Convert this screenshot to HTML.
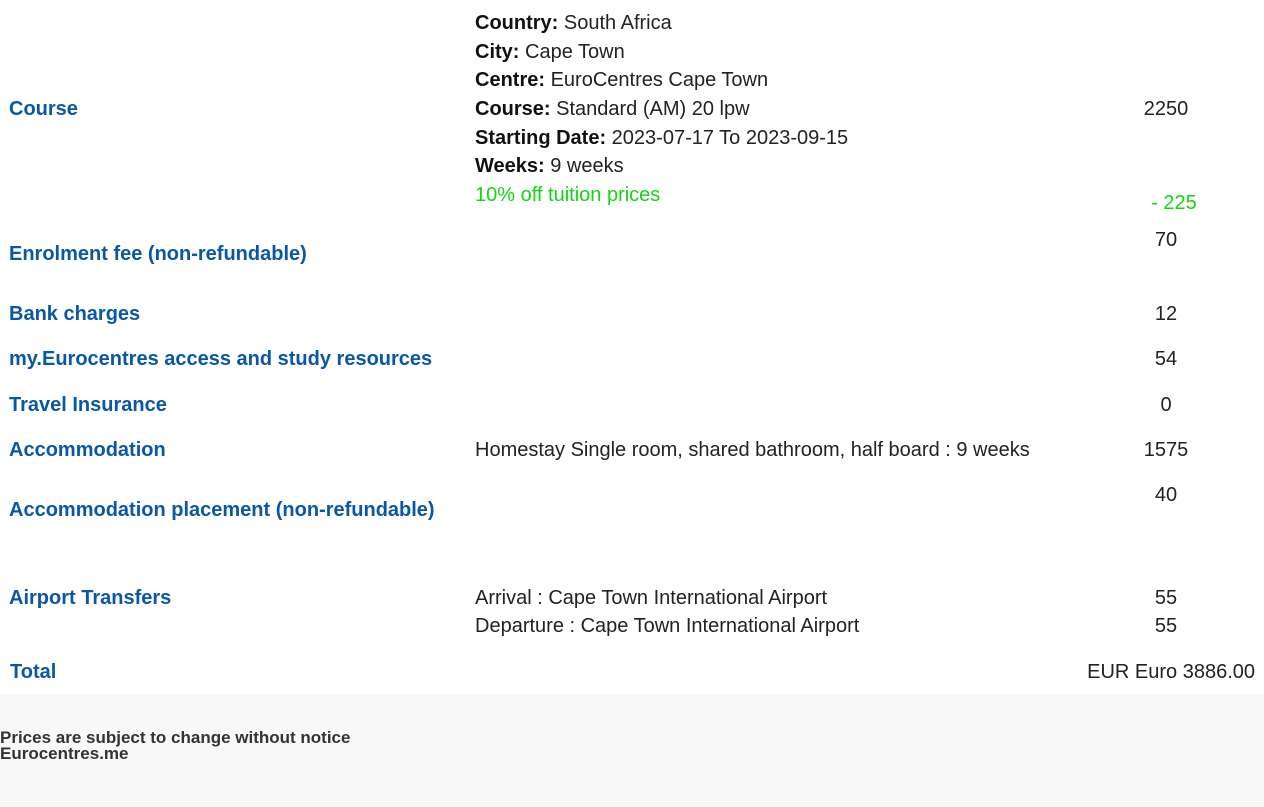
<!DOCTYPE html>
<html><head><style>
body{margin:0;width:1264px;height:807px;position:relative;background:#fff;font-family:"Liberation Sans",Arial,sans-serif;font-size:20px;color:#222;overflow:hidden}
.a{position:absolute;line-height:28px;white-space:nowrap}
.l{left:9px;color:#0a57a6;font-weight:bold}
.m{left:475px}
.n{left:1106px;width:120px;text-align:center}
.g{color:#14d414}
b{color:#111}
.f{position:absolute;left:0;top:694px;width:1264px;height:113px;background:#f8f8f8}
.ft{position:absolute;left:0;top:730px;font-size:17px;font-weight:bold;color:#333;line-height:16px}
</style></head><body>
<div class="a m" style="top:9px"><b>Country:</b> South Africa</div>
<div class="a m" style="top:38px"><b>City:</b> Cape Town</div>
<div class="a m" style="top:66px"><b>Centre:</b> EuroCentres Cape Town</div>
<div class="a m" style="top:95px"><b>Course:</b> Standard (AM) 20 lpw</div>
<div class="a m" style="top:124px"><b>Starting Date:</b> 2023-07-17 To 2023-09-15</div>
<div class="a m" style="top:152px"><b>Weeks:</b> 9 weeks</div>
<div class="a m g" style="top:181px">10% off tuition prices</div>
<div class="a l" style="top:95px">Course</div>
<div class="a n" style="top:95px">2250</div>
<div class="a n g" style="top:189px;left:1114px">- 225</div>
<div class="a l" style="top:240px">Enrolment fee (non-refundable)</div>
<div class="a n" style="top:226px">70</div>
<div class="a l" style="top:300px">Bank charges</div>
<div class="a n" style="top:300px">12</div>
<div class="a l" style="top:345px">my.Eurocentres access and study resources</div>
<div class="a n" style="top:345px">54</div>
<div class="a l" style="top:391px">Travel Insurance</div>
<div class="a n" style="top:391px">0</div>
<div class="a l" style="top:436px">Accommodation</div>
<div class="a m" style="top:436px">Homestay Single room, shared bathroom, half board : 9 weeks</div>
<div class="a n" style="top:436px">1575</div>
<div class="a l" style="top:496px">Accommodation placement (non-refundable)</div>
<div class="a n" style="top:481px">40</div>
<div class="a l" style="top:584px">Airport Transfers</div>
<div class="a m" style="top:584px">Arrival : Cape Town International Airport</div>
<div class="a m" style="top:612px">Departure : Cape Town International Airport</div>
<div class="a n" style="top:584px">55</div>
<div class="a n" style="top:612px">55</div>
<div class="a l" style="top:658px;left:10px">Total</div>
<div class="a" style="top:658px;right:9px">EUR Euro 3886.00</div>
<div class="f"></div>
<div class="ft">Prices are subject to change without notice<br>Eurocentres.me</div>
</body></html>
